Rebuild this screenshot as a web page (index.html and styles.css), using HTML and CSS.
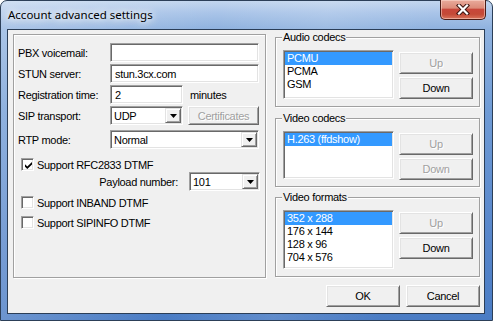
FILE: index.html
```html
<!DOCTYPE html>
<html>
<head>
<meta charset="utf-8">
<title>Account advanced settings</title>
<link rel="stylesheet" href="styles.css">
</head>
<body>
<div class="window">
  <div class="titlebar">
    <span class="title">Account advanced settings</span>
    <button class="close" aria-label="Close">
      <svg width="14" height="11" viewBox="0 0 14 11">
        <path d="M3 1.5 L11 9.5 M11 1.5 L3 9.5" stroke="#3b1410" stroke-width="4.2" stroke-linecap="square" fill="none"/>
        <path d="M3 1.5 L11 9.5 M11 1.5 L3 9.5" stroke="#fff" stroke-width="2.2" stroke-linecap="square" fill="none"/>
      </svg>
    </button>
  </div>
  <div class="client">
    <div class="main">
      <div class="panel">
        <div class="row r1">
          <span class="lbl">PBX voicemail:</span>
          <div class="edit w-full"></div>
        </div>
        <div class="row r2">
          <span class="lbl">STUN server:</span>
          <div class="edit w-full">stun.3cx.com</div>
        </div>
        <div class="row r3">
          <span class="lbl">Registration time:</span>
          <div class="edit w-short">2</div>
          <span class="unit">minutes</span>
        </div>
        <div class="row r4">
          <span class="lbl">SIP transport:</span>
          <div class="combo w-short"><span class="combo-text">UDP</span><span class="drop"><svg width="7" height="4" viewBox="0 0 7 4"><path d="M0 0H7L3.5 4Z" fill="#000"/></svg></span></div>
          <button class="btn btn-cert" disabled>Certificates</button>
        </div>
        <div class="row r5">
          <span class="lbl">RTP mode:</span>
          <div class="combo w-full"><span class="combo-text">Normal</span><span class="drop"><svg width="7" height="4" viewBox="0 0 7 4"><path d="M0 0H7L3.5 4Z" fill="#000"/></svg></span></div>
        </div>
        <div class="row chk-row r6">
          <span class="check"><svg width="7" height="7" viewBox="0 0 7 7"><path d="M0 2.2 L2.3 4.4 L7 0 V2.6 L2.3 7 L0 4.8Z" fill="#000"/></svg></span>
          <span class="chk-lbl">Support RFC2833 DTMF</span>
        </div>
        <div class="row r7">
          <span class="payload-lbl">Payload number:</span>
          <div class="combo w-payload"><span class="combo-text">101</span><span class="drop"><svg width="7" height="4" viewBox="0 0 7 4"><path d="M0 0H7L3.5 4Z" fill="#000"/></svg></span></div>
        </div>
        <div class="row chk-row r8">
          <span class="check"></span>
          <span class="chk-lbl">Support INBAND DTMF</span>
        </div>
        <div class="row chk-row r9">
          <span class="check"></span>
          <span class="chk-lbl">Support SIPINFO DTMF</span>
        </div>
      </div>
      <div class="side">
        <fieldset class="group g-audio">
          <legend>Audio codecs</legend>
          <div class="group-body">
            <ul class="list">
              <li class="sel">PCMU</li>
              <li>PCMA</li>
              <li>GSM</li>
            </ul>
            <div class="btn-col">
              <button class="btn" disabled>Up</button>
              <button class="btn">Down</button>
            </div>
          </div>
        </fieldset>
        <fieldset class="group g-video">
          <legend>Video codecs</legend>
          <div class="group-body">
            <ul class="list">
              <li class="sel">H.263 (ffdshow)</li>
            </ul>
            <div class="btn-col">
              <button class="btn" disabled>Up</button>
              <button class="btn" disabled>Down</button>
            </div>
          </div>
        </fieldset>
        <fieldset class="group g-formats">
          <legend>Video formats</legend>
          <div class="group-body">
            <ul class="list">
              <li class="sel">352 x 288</li>
              <li>176 x 144</li>
              <li>128 x 96</li>
              <li>704 x 576</li>
            </ul>
            <div class="btn-col">
              <button class="btn" disabled>Up</button>
              <button class="btn">Down</button>
            </div>
          </div>
        </fieldset>
      </div>
    </div>
    <div class="footer">
      <button class="btn">OK</button>
      <button class="btn">Cancel</button>
    </div>
  </div>
</div>
</body>
</html>
```
FILE: styles.css
```css
* { box-sizing: border-box; }
html, body { margin: 0; padding: 0; }
body {
  width: 493px;
  height: 321px;
  overflow: hidden;
  background: #ffffff;
  font-family: "Liberation Sans", Arial, sans-serif;
  font-size: 11px;
  letter-spacing: -0.3px;
  color: #000;
}

.window {
  width: 493px;
  height: 321px;
  border: 1px solid #2c3f58;
  border-radius: 7px 7px 0 0;
  background:
    linear-gradient(100deg, rgba(255,255,255,0.25) 0%, rgba(255,255,255,0) 40%, rgba(255,255,255,0.12) 60%, rgba(255,255,255,0) 80%),
    linear-gradient(to bottom, #c2d6ee 0px, #a9c4e8 12px, #8fb2df 28px, #6f9bd5 110px, #5685ca 240px, #4a7cc4 321px);
  display: flex;
  flex-direction: column;
}

.titlebar {
  height: 28px;
  display: flex;
  align-items: flex-start;
}
.title {
  padding: 6px 0 0 7px;
  font-family: "Noto Sans", "Open Sans", sans-serif;
  font-size: 11.5px;
  line-height: 16px;
  letter-spacing: 0;
  color: #000;
  text-shadow: 0 0 6px #fff, 0 0 10px #fff, 0 0 14px rgba(255,255,255,0.9);
}
.close {
  margin-left: auto;
  margin-right: 6px;
  margin-top: -1px;
  width: 46px;
  height: 20px;
  padding: 0;
  border: 1px solid #4a1c16;
  border-top: none;
  border-radius: 0 0 5px 5px;
  background: linear-gradient(to bottom, #e9ab9c 0%, #dc8b79 42%, #c8473a 50%, #c44a37 75%, #d9745c 100%);
  box-shadow: inset 0 0 0 1px rgba(255,225,215,0.5);
  display: flex;
  align-items: center;
  justify-content: center;
}

.client {
  margin-left: 6px;
  width: 478px;
  height: 285px;
  border: 1px solid #2b3e57;
  background: #f0f0f0;
  display: flex;
  flex-direction: column;
}

.main {
  display: flex;
  align-items: flex-start;
  padding-left: 5px;
}

.panel {
  margin-top: 4px;
  width: 253px;
  height: 244px;
  border: 1px solid #a0a0a0;
  box-shadow: inset 1px 1px 0 #fff, 1px 1px 0 #fff;
  padding: 8px 5px 0 4px;
  display: flex;
  flex-direction: column;
}

.row {
  display: flex;
  align-items: center;
  height: 19px;
}
.r2, .r3, .r4 { margin-top: 2px; }
.r5 { margin-top: 5px; }
.r6 { margin-top: 8px; }
.r7 { justify-content: flex-end; }
.r8 { margin-top: 4px; }
.r9 { margin-top: 5px; }
.chk-row { height: 15px; }

.lbl { width: 92px; white-space: nowrap; }
.unit { margin-left: 7px; }
.payload-lbl { margin-right: 11px; }

.edit, .combo {
  height: 19px;
  background: #fff;
  border: 1px solid;
  border-color: #a0a0a0 #fff #fff #a0a0a0;
  box-shadow: inset 1px 1px 0 #696969, inset -1px -1px 0 #e3e3e3;
  display: flex;
  align-items: center;
  white-space: nowrap;
}
.edit { padding: 1px 4px 0 4px; }
.combo { padding: 1px; }
.combo-text { flex: 1; padding: 1px 0 0 2px; }
.w-full { width: 149px; }
.w-short { width: 73px; }
.w-payload { width: 71px; }

.drop {
  width: 16px;
  height: 15px;
  background: #f0f0f0;
  border: 1px solid;
  border-color: #e3e3e3 #696969 #696969 #e3e3e3;
  box-shadow: inset 1px 1px 0 #fff, inset -1px -1px 0 #a0a0a0;
  display: flex;
  align-items: center;
  justify-content: center;
}

.check {
  margin-left: 3px;
  width: 13px;
  height: 13px;
  background: #fff;
  border: 1px solid;
  border-color: #a0a0a0 #fff #fff #a0a0a0;
  box-shadow: inset 1px 1px 0 #696969, inset -1px -1px 0 #e3e3e3;
  display: flex;
  align-items: center;
  justify-content: center;
  padding: 1px 0 0 1px;
}
.chk-lbl { margin-left: 3px; white-space: nowrap; }

.btn {
  width: 74px;
  height: 22px;
  padding: 0;
  font-family: inherit;
  font-size: 11px;
  letter-spacing: -0.3px;
  color: #000;
  background: #f0f0f0;
  border: 1px solid;
  border-color: #fff #696969 #696969 #fff;
  box-shadow: inset 1px 1px 0 #e3e3e3, inset -1px -1px 0 #a0a0a0;
}
.btn:disabled {
  color: #a0a0a0;
  text-shadow: 1px 1px 0 #fff;
}
.btn-cert { margin-left: 5px; width: 71px; height: 19px; }

.side {
  margin-left: 9px;
  margin-top: 1px;
  display: flex;
  flex-direction: column;
}
.group {
  margin: 0;
  min-width: 0;
  width: 205px;
  border: 1px solid #a0a0a0;
  box-shadow: inset 1px 1px 0 #fff, 1px 1px 0 #fff;
  padding: 6px 0 7px 7px;
}
.group legend {
  padding: 0 1px;
  margin-left: -1px;
  line-height: 13px;
  background: #f0f0f0;
}
.g-video { margin-top: 5px; padding-bottom: 6px; }
.g-formats { margin-top: 4px; }

.group-body { display: flex; align-items: flex-start; }

.list {
  margin: 0;
  padding: 1px;
  list-style: none;
  width: 111px;
  height: 49px;
  background: #fff;
  border: 1px solid;
  border-color: #a0a0a0 #fff #fff #a0a0a0;
  box-shadow: inset 1px 1px 0 #696969, inset -1px -1px 0 #e3e3e3;
}
.g-video .list { height: 48px; }
.g-formats .list { height: 59px; }
.list li {
  height: 13px;
  line-height: 13px;
  padding-left: 2px;
  white-space: nowrap;
}
.list li.sel { background: #3399ff; color: #fff; }

.btn-col {
  margin-left: 5px;
  margin-top: 2px;
  display: flex;
  flex-direction: column;
  gap: 3px;
}

.footer {
  margin-top: 7px;
  padding-right: 4px;
  display: flex;
  justify-content: flex-end;
  gap: 6px;
}
```
